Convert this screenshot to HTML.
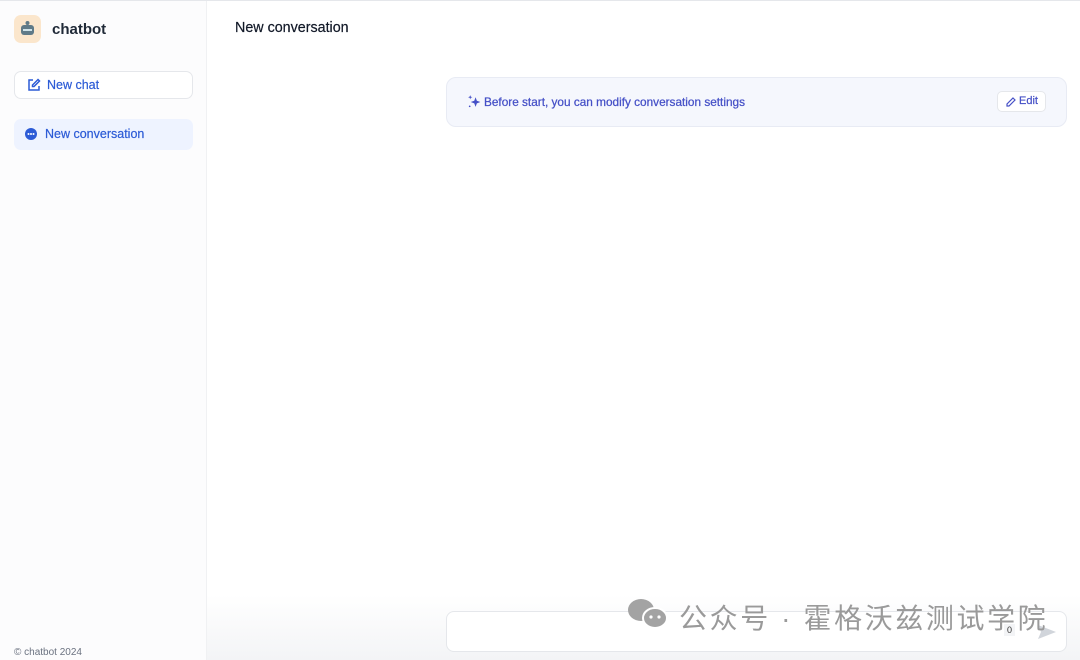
<!DOCTYPE html>
<html><head><meta charset="utf-8"><style>
*{box-sizing:border-box;margin:0;padding:0}
body{width:1080px;height:660px;overflow:hidden;background:#fff;font-family:"Liberation Sans","Noto Sans CJK SC",sans-serif;position:relative}
.topline{position:absolute;left:0;top:0;width:1080px;height:1px;background:#e5e7eb}
.side{position:absolute;left:0;top:1px;width:207px;height:659px;background:#fcfcfd;border-right:1px solid #f0f1f3}
.logo{position:absolute;left:14px;top:14px;width:27px;height:28px;background:#fbe6cc;border-radius:7px}
.title{position:absolute;left:52px;top:20px;font-size:15px;font-weight:bold;color:#1f2937}
.nc{position:absolute;left:14px;top:70px;width:179px;height:28px;border:1px solid #e5e7eb;border-radius:7px;background:#fff;color:#2c5bd6;font-size:12.5px;-webkit-text-stroke:0.2px #2c5bd6}
.nc span{position:absolute;left:32px;top:6px}
.conv{position:absolute;left:14px;top:118px;width:179px;height:31px;background:#eef3ff;border-radius:7px;color:#2c5bd6;font-size:12.5px;-webkit-text-stroke:0.2px #2c5bd6}
.conv span{position:absolute;left:31px;top:8px}
.foot{position:absolute;left:14px;top:646px;font-size:10px;color:#6b7280}
.head{position:absolute;left:235px;top:20px;font-size:14.3px;color:#111827;-webkit-text-stroke:0.2px #111827}
.banner{position:absolute;left:446px;top:77px;width:621px;height:50px;background:#f5f7fd;border:1px solid #e8ebf4;border-radius:10px}
.banner .t{position:absolute;left:37px;top:17px;font-size:11.8px;color:#4550c7;-webkit-text-stroke:0.25px #4550c7}
.edit{position:absolute;left:550px;top:13px;width:49px;height:21px;background:#fff;border:1px solid #e5e7eb;border-radius:5px;font-size:11px;color:#4550c7;-webkit-text-stroke:0.2px #4550c7}
.edit span{position:absolute;left:21px;top:3px}
.bottom{position:absolute;left:207px;top:595px;width:873px;height:65px;background:linear-gradient(#fff,#f3f4f6)}
.input{position:absolute;left:446px;top:611px;width:621px;height:41px;background:#fff;border:1px solid #e5e7eb;border-radius:8px}
.wm{position:absolute;left:679px;top:597px;font-size:28px;color:#9a9a9a;letter-spacing:2.6px;white-space:nowrap}
</style></head><body>
<div class="topline"></div>
<div class="side">
<div class="logo"><svg width="27" height="28"><rect x="7" y="10" width="13" height="10" rx="3" fill="#5f7a88"/><circle cx="13.5" cy="8" r="2" fill="#5f7a88"/><rect x="9" y="14" width="9" height="2" fill="#cfe3ea"/></svg></div>
<div class="title">chatbot</div>
<div class="nc"><svg style="position:absolute;left:12px;top:6px" width="14" height="14" viewBox="0 0 14 14" fill="none" stroke="#2c5bd6" stroke-width="1.5"><path d="M6 2H2v10h10V8"/><path d="M11 1.5l1.5 1.5L7 8.5H5.5V7z"/></svg><span>New chat</span></div>
<div class="conv"><svg style="position:absolute;left:11px;top:9px" width="12" height="12"><circle cx="6" cy="6" r="6" fill="#2c5bd6"/><circle cx="3.5" cy="6" r="1" fill="#fff"/><circle cx="6" cy="6" r="1" fill="#fff"/><circle cx="8.5" cy="6" r="1" fill="#fff"/></svg><span>New conversation</span></div>
<div class="foot">© chatbot 2024</div>
</div>
<div class="head">New conversation</div>
<div class="banner"><svg style="position:absolute;left:20px;top:16px" width="15" height="15" viewBox="0 0 14 14"><path d="M8 3l1.2 3.3L12.5 7.5 9.2 8.7 8 12 6.8 8.7 3.5 7.5 6.8 6.3z" fill="#4550c7"/><path d="M3 1l.5 1.5L5 3 3.5 3.5 3 5 2.5 3.5 1 3l1.5-.5z" fill="#4550c7"/><circle cx="2.5" cy="11.5" r=".8" fill="#4550c7"/></svg><div class="t">Before start, you can modify conversation settings</div>
<div class="edit"><svg style="position:absolute;left:8px;top:5px" width="10" height="10" viewBox="0 0 10 10" fill="none" stroke="#4550c7" stroke-width="1.2"><path d="M7 1l2 2-6 6H1V7z"/></svg><span>Edit</span></div></div>
<div class="bottom"></div>
<div class="input"><div style="position:absolute;left:557px;top:12px;font-size:9px;color:#333;background:#f3f4f6;padding:1px 3px">0</div><svg style="position:absolute;left:591px;top:13px" width="18" height="14"><path d="M0 0L18 7 0 14 3 7z" fill="#d1d5db"/></svg></div>
<svg style="position:absolute;left:627px;top:598px" width="42" height="34"><ellipse cx="14" cy="12" rx="13" ry="11" fill="#a3a3a3"/><ellipse cx="28" cy="20" rx="12" ry="10" fill="#a3a3a3" stroke="#fff" stroke-width="2"/><circle cx="24" cy="19" r="1.6" fill="#fff"/><circle cx="32" cy="19" r="1.6" fill="#fff"/></svg>
<div class="wm">公众号 · 霍格沃兹测试学院</div>
</body></html>
